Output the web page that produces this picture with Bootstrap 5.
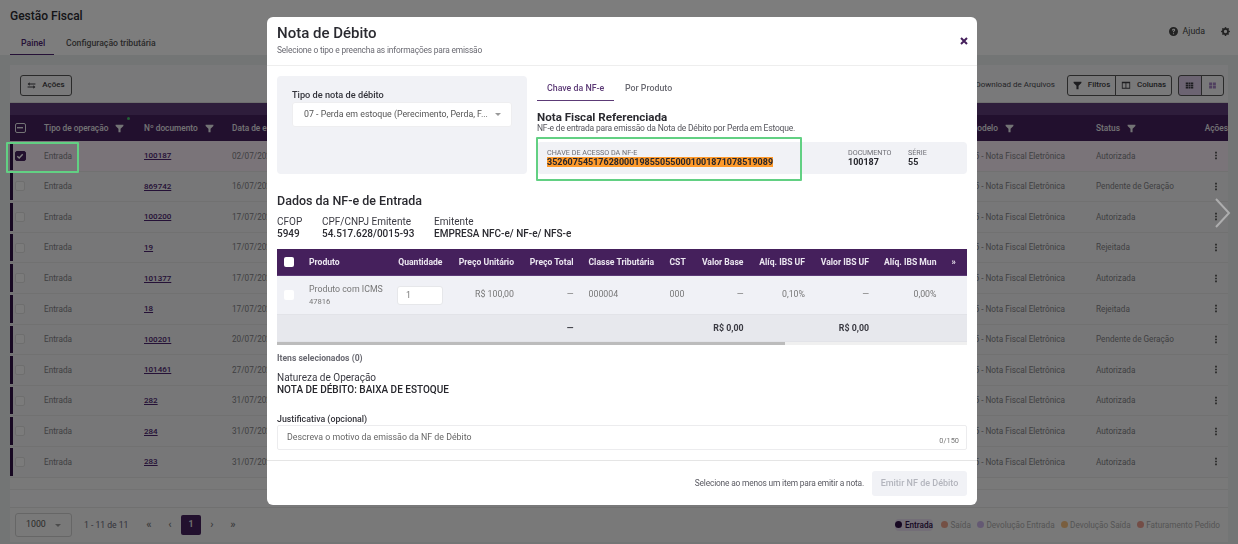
<!DOCTYPE html>
<html lang="pt-BR">
<head>
  <meta charset="UTF-8" />
  <meta name="viewport" content="width=device-width, initial-scale=1.0"/>
  <title>Gestão Fiscal</title>
  <link href="https://cdn.jsdelivr.net/npm/bootstrap@5.3.3/dist/css/bootstrap.min.css" rel="stylesheet">
  <style>
    html, body { height: 544px; overflow: hidden; }
    body { font-family: "Roboto", "Liberation Sans", sans-serif; background: #e6eaea; color: #4a4a52; font-size: 8.2px; }
    svg { display: block; flex: none; }

    /* pagina de fundo */
    .top-area { height: 55px; background: #fbfbfb; padding: 0 10px; }
    .top-title { font-size: 12px; font-weight: 500; color: #2a2a30; padding-top: 9px; line-height: 15px; }
    .top-tabs { margin-top: 7px; }
    .top-tab { font-size: 8.7px; font-weight: 500; line-height: 24px; height: 24px; padding: 0 11px; color: #555; white-space: nowrap; }
    .top-tab.on { color: #4a226e; border-bottom: 1px solid #4a226e; margin-right: 1px; width: 44px; }
    .top-help { margin: -30px -1.5px 0 0; gap: 5px; font-size: 8.8px; color: #444; }
    .page-panel { margin: 10px 10px 0; background: #f3f3f4; height: 443px; border-bottom: 1px solid #e0e0e0; }
    .tools { height: 38px; padding: 10px 4px 0 10px; border-bottom: 1px solid #ddd; }
    .ghost-btn { height: 20.5px; border: 1px solid #555; border-radius: 3px; font-size: 8px; font-weight: 500; color: #3a3a40; padding: 0 7px; gap: 6px; background: transparent; justify-content: center; }
    .btn-group .ghost-btn { border-radius: 0; margin-left: -1px; flex: none; }
    .btn-group .ghost-btn:first-child { border-radius: 3px 0 0 3px; margin-left: 0; }
    .btn-group .ghost-btn:last-child { border-radius: 0 3px 3px 0; }
    .ghost-btn.on { background: #d8c8e4; }
    .w-act { width: 52px; }
    .w-fil { width: 49px; } .w-col { width: 57px; } .w-view { width: 23.5px; padding: 0; }
    .download-txt { font-size: 8px; color: #4a4a52; margin-right: 12px; line-height: 20px; }
    .strip { height: 12px; background: #5c3a76; }
    .grid-row { height: 30.6px; border-bottom: 1px solid #e2e2e2; background: #efeff0; color: #808085; }
    .grid-head { height: 26px; background: #45205c; color: #e6e6ea; font-weight: 500; font-size: 8.3px; border: 0; }
    .grid-row.picked { background: #f4e8f2; }
    .op-bar { width: 2.5px; align-self: stretch; margin: 1px 0; background: #2e1045; flex: none; }
    .grid-head .op-bar { background: transparent; }
    .c-chk { width: 31.5px; flex: none; padding-left: 2.5px; }
    .c-tipo { width: 100px; flex: none; gap: 7px; }
    .c-doc { width: 88px; flex: none; gap: 7px; }
    .c-data { width: 738px; flex: none; }
    .c-mod { width: 126px; flex: none; gap: 7px; }
    .c-stat { width: 99px; flex: none; gap: 7px; }
    .c-act { flex: 1; text-align: right; }
    .c-kebab { flex: 1; padding-left: 19px; color: #444; }
    .doc-lnk { color: #4a226e; font-weight: 500; font-size: 8px; text-decoration: underline; }
    .tick-box { width: 10px; height: 10px; border: 1px solid #ddd; border-radius: 2px; background: #f6f6f6; }
    .tick-box.dark { width: 10.5px; height: 10.5px; background: #45205c; border-color: #45205c; }
    .tick-box.minus { width: 10.5px; height: 10.5px; background: transparent; border: 1px solid #e6e6ea; }
    .filter-dot { left: 83px; top: -5px; width: 3px; height: 3px; border-radius: 50%; background: #45c06a; }
    .gap-strip { height: 12px; background: #f2f2f2; border-bottom: 1px solid #e4e4e4; }
    .pager-area { padding: 0 8px 0 5px; height: 34px; margin: 0 10px; background: #f3f3f3; }
    .page-size { width: 57px; height: 24px; border: 1px solid #ccc; border-radius: 3px; padding: 0 10px; font-size: 8.8px; color: #555; margin-right: 12px; }
    .caret-dn { width: 0; height: 0; border: 3px solid transparent; border-top: 3px solid #999; border-bottom: 0; }
    .page-count { color: #667; font-size: 8.6px; white-space: nowrap; width: 44px; }
    .page-arrows { color: #777; font-size: 11px; font-weight: 500; margin-left: 10.5px; }
    .page-arrows > span { width: 21px; text-align: center; }
    .page-now { height: 20px; border-radius: 2px; background: #45205c; color: #ddd; font-weight: 700; font-size: 8.8px; margin: 0 .5px; }
    .page-arrows > span.page-now { width: 20px; }
    .legend-row { gap: 6px; font-size: 8.2px; color: #aaa; }
    .legend-item { gap: 2.5px; }
    .legend-item.on { color: #2e1045; font-weight: 500; background: #e6dcee; border-radius: 4px; margin-right: 2px; }
    .legend-dot { width: 7px; height: 7px; border-radius: 50%; }

    /* modal */
    .modal-dialog.debit-dialog { width: 710px; max-width: 710px; margin: 17px 0 0 267px; }
    .debit-dialog .modal-content { height: 488px; border: 0; border-radius: 6px; color: #26262c; overflow: hidden; }
    .debit-dialog .modal-header { display: block; height: 48.5px; padding: 9px 10px 0; border-bottom: 1px solid #eee; }
    .debit-title { font-size: 15px; font-weight: 500; line-height: 15px; color: #2a2a30; margin: 0; }
    .debit-sub { font-size: 8.4px; letter-spacing: -.18px; color: #6a6a72; margin-top: 3.5px; line-height: 11px; }
    .debit-close { top: 20px; right: 9px; line-height: 0; }
    .debit-dialog .modal-body { padding: 10.5px 10px 0; flex: none; height: 394px; }
    .type-card { width: 250px; height: 98px; background: #f1f2f6; border-radius: 4px; padding: 13px 15px; flex: none; }
    .type-lbl { font-size: 9.2px; font-weight: 500; color: #33333a; line-height: 12px; margin-bottom: 1px; }
    .type-sel { height: 25px; background: #fff; border: 1px solid #eeeef0; border-radius: 3px; padding: 0 10px 0 11px; font-size: 8.8px; color: #555; white-space: nowrap; }
    .ref-col { width: 430px; margin-left: 10px; flex: none; }
    .ref-tabs { height: 24px; }
    .ref-tab { font-size: 8.8px; font-weight: 500; line-height: 24px; padding: 0 10px; color: #6a6a72; width: 78px; text-align: center; }
    .ref-tab.on { color: #5c3a76; border-bottom: 1px solid #5c3a76; height: 25px; width: 77px; }
    .ref-tab + .ref-tab { margin-left: 1px; width: auto; }
    .ref-title { font-size: 11.6px; font-weight: 700; line-height: 13px; margin-top: 11px; color: #2a2a30; }
    .ref-sub { font-size: 8.5px; letter-spacing: -.19px; line-height: 9px; color: #55555c; }
    .key-box { height: 32px; margin-top: 9px; background: #f1f2f6; border-radius: 4px; padding: 7px 10px 0; }
    .key-lbl { font-size: 7.2px; line-height: 8px; color: #6f6f76; white-space: nowrap; }
    .key-val { font-size: 8.96px; line-height: 11px; font-weight: 700; color: #26262c; white-space: nowrap; }
    .key-val mark { background: #ff9a2a; padding: 0; color: #26262c; }
    .key-doc { width: 60px; flex: none; }
    .key-ser { width: 49px; flex: none; }
    .data-title { font-size: 12.5px; font-weight: 500; line-height: 15px; margin-top: 19px; color: #2a2a30; }
    .data-cols { margin-top: 8px; font-size: 10px; line-height: 12px; color: #3a3a42; }
    .data-cols b { display: block; font-weight: 500; color: #2a2a30; }
    .items-wrap { margin-top: 9px; height: 96px; }
    .items-row { background: #f0f1f6; height: 39px; color: #777; font-size: 8.8px; border-bottom: 1px solid #e2e3e8; }
    .items-head { background: #45205c; height: 27px; color: #ebe6f0; font-weight: 700; font-size: 8.6px; border-bottom: 1px solid #5c3a76; }
    .items-foot { background: #e7e8ed; height: 27px; padding-top: 1px; font-weight: 700; font-size: 8.8px; color: #3a3a42; border-bottom: 1px solid #e2e3e8; }
    .cel { padding: 0 7.5px; flex: none; white-space: nowrap; text-align: right; }
    .w-c { width: 24.5px; padding: 0 0 0 7px; } .w-p { width: 88px; text-align: left; } .w-q { width: 60.5px; }
    .w-u { width: 71.5px; } .w-t { width: 59.5px; } .w-k { width: 81px; text-align: left; } .w-s { width: 31.5px; text-align: left; }
    .w-b { width: 57.5px; } .w-i { width: 61.5px; } .w-v { width: 64px; } .w-m { width: 67.5px; } .w-x { width: 23px; text-align: left; }
    .prod-code { display: block; font-size: 7.6px; line-height: 10px; margin-top: 2px; }
    .prod-name { display: block; line-height: 11px; }
    .qty-box { width: 46px; height: 19px; background: #fff; border: 1px solid #e6e7ea; border-radius: 3px; text-align: left; padding-left: 8px; line-height: 17px; }
    .white-box { width: 10px; height: 10px; background: #fff; border-radius: 2px; display: block; }
    .scroll-track { height: 3px; background: #f0f0f0; }
    .scroll-thumb { width: 508px; height: 3px; background: #bcbcbc; }
    .items-count { font-size: 8.6px; font-weight: 700; color: #6a6a72; line-height: 10px; margin-top: 8px; }
    .nature { font-size: 10px; line-height: 12px; margin-top: 9px; color: #3a3a42; }
    .nature b { display: block; font-weight: 500; color: #26262c; }
    .just-lbl { font-size: 8.8px; font-weight: 500; line-height: 11px; margin-top: 18px; color: #33333a; }
    .just-box { height: 25px; border: 1px solid #ececee; border-radius: 2px; padding: 0 7px 0 9px; font-size: 8.8px; color: #666; }
    .just-count { font-size: 7.4px; color: #777; align-self: flex-end; padding-bottom: 3px; }
    .debit-dialog .modal-footer { height: 45.5px; padding: 2px 10px 0; border-top: 1px solid #e5e5e5; gap: 8px; flex-wrap: nowrap; }
    .debit-dialog .modal-footer > * { margin: 0; }
    .foot-note { font-size: 8.4px; letter-spacing: -.18px; color: #5a5a62; }
    .btn.emit-btn:disabled { width: 95px; height: 25px; padding: 0; border: 0; border-radius: 3px; background: #f1f2f6; color: #b3b5bd; font-size: 9px; font-weight: 500; opacity: 1; }

    /* destaque verde e seta por cima de tudo */
    .green-mark { position: absolute; z-index: 1060; border: 2px solid #62d083; pointer-events: none; border-radius: 1px; }
    .green-a { left: 6px; top: 142px; width: 73px; height: 31px; }
    .green-b { left: 536px; top: 137px; width: 266px; height: 44px; }
    .next-arrow { position: absolute; z-index: 1060; left: 1213px; top: 197px; opacity: .4; }
  </style>
</head>
<body>
  <svg width="0" height="0" class="position-absolute">
    <symbol id="i-funnel" viewBox="0 0 12 12"><path d="M.8 1h10.400v1.600L7.400 6.400V11H4.600V6.400L.8 2.600z" fill="currentColor"/></symbol>
    <symbol id="i-swap" viewBox="0 0 12 12"><path d="M3.500 1.600 .8 4l2.700 2.400V4.800h7.700V3.200H3.500zM8.500 5.600v1.600H.8v1.600h7.700v1.600L11.200 8z" fill="currentColor"/></symbol>
    <symbol id="i-grid" viewBox="0 0 12 12"><path d="M1 2h3v2.200H1zM4.600 2h2.800v2.200H4.600zM8 2h3v2.200H8zM1 4.900h3v2.200H1zM4.600 4.900h2.800v2.200H4.600zM8 4.900h3v2.200H8zM1 7.800h3V10H1zM4.600 7.800h2.800V10H4.600zM8 7.800h3V10H8z" fill="currentColor"/></symbol>
    <symbol id="i-tiles" viewBox="0 0 12 12"><path d="M1.500 2h4v3.600h-4zM6.500 2h4v3.600h-4zM1.500 6.400h4V10h-4zM6.500 6.400h4V10h-4z" fill="currentColor"/></symbol>
    <symbol id="i-cols" viewBox="0 0 12 12"><path fill-rule="evenodd" d="M1 2h10v8.400H1zM2 4v5.400h3.400V4zM6.400 4v5.400H10V4z" fill="currentColor"/></symbol>
    <symbol id="i-kebab" viewBox="0 0 4 12"><path d="M.9 1h2.200v2.200H.9zM.9 4.900h2.200v2.200H.9zM.9 8.800h2.200V11H.9z" fill="currentColor"/></symbol>
    <symbol id="i-help" viewBox="0 0 16 16"><path fill-rule="evenodd" d="M8 0a8 8 0 1 1 0 16A8 8 0 0 1 8 0zM5.200 6h2c.1-.8.4-1.200.9-1.200.5 0 .8.3.8.8 0 .4-.2.7-.8 1.100-.8.6-1.100 1.100-1.100 2.100v.4h1.900v-.3c0-.5.2-.8.8-1.200.8-.6 1.300-1.200 1.300-2.200C11 3.900 9.800 3 8.100 3 6.300 3 5.300 4.100 5.200 6zM7 11v2h2v-2z" fill="currentColor"/></symbol>
    <symbol id="i-gear" viewBox="0 0 16 16"><path d="M9.405 1.050c-.413-1.400-2.397-1.400-2.810 0l-.1.34a1.464 1.464 0 0 1-2.105.872l-.31-.17c-1.283-.698-2.686.705-1.987 1.987l.169.311c.446.82.023 1.841-.872 2.105l-.34.1c-1.400.413-1.400 2.397 0 2.810l.34.1a1.464 1.464 0 0 1 .872 2.105l-.17.31c-.698 1.283.705 2.686 1.987 1.987l.311-.169a1.464 1.464 0 0 1 2.105.872l.1.34c.413 1.400 2.397 1.400 2.810 0l.1-.34a1.464 1.464 0 0 1 2.105-.872l.31.17c1.283.698 2.686-.705 1.987-1.987l-.169-.311a1.464 1.464 0 0 1 .872-2.105l.34-.1c1.400-.413 1.400-2.397 0-2.810l-.34-.1a1.464 1.464 0 0 1-.872-2.105l.17-.31c.698-1.283-.705-2.686-1.987-1.987l-.311.169a1.464 1.464 0 0 1-2.105-.872l-.1-.34zM8 10.930a2.929 2.929 0 1 1 0-5.860 2.929 2.929 0 0 1 0 5.858z" fill="currentColor"/></symbol>
  </svg>

  <header class="top-area">
    <div class="top-title">Gestão Fiscal</div>
    <div class="d-flex top-tabs">
      <div class="top-tab on">Painel</div>
      <div class="top-tab">Configuração tributária</div>
    </div>
    <div class="d-flex justify-content-end align-items-center top-help">
      <svg width="9" height="9"><use href="#i-help"/></svg><span>Ajuda</span>
      <svg style="margin-left:10.5px" width="9" height="9"><use href="#i-gear"/></svg>
    </div>
  </header>

  <section class="page-panel">
    <div class="tools d-flex">
      <button type="button" class="btn ghost-btn w-act d-flex align-items-center"><svg width="9" height="9"><use href="#i-swap"/></svg>Ações</button>
      <div class="ms-auto d-flex align-items-start">
        <span class="download-txt">Download de Arquivos</span>
        <div class="btn-group">
          <button type="button" class="btn ghost-btn w-fil d-flex align-items-center"><svg width="9" height="9"><use href="#i-funnel"/></svg>Filtros</button>
          <button type="button" class="btn ghost-btn w-col d-flex align-items-center"><svg width="10" height="10"><use href="#i-cols"/></svg>Colunas</button>
        </div>
        <div class="btn-group" style="margin-left:6px">
          <button type="button" class="btn ghost-btn w-view on d-flex align-items-center"><svg width="9" height="9"><use href="#i-grid"/></svg></button>
          <button type="button" class="btn ghost-btn w-view d-flex align-items-center"><svg width="9" height="9" style="color:#a080c0"><use href="#i-tiles"/></svg></button>
        </div>
      </div>
    </div>
    <div class="strip"></div>
    <div class="grid-row grid-head d-flex align-items-center">
      <span class="op-bar"></span>
      <div class="c-chk"><span class="tick-box minus d-flex align-items-center justify-content-center"><svg width="6" height="2"><rect width="6" height="1.4" fill="#e6e6ea"/></svg></span></div>
      <div class="c-tipo d-flex align-items-center position-relative"><span>Tipo de operação</span><svg width="9" height="9"><use href="#i-funnel"/></svg><i class="filter-dot position-absolute"></i></div>
      <div class="c-doc d-flex align-items-center"><span>Nº documento</span><svg width="9" height="9"><use href="#i-funnel"/></svg></div>
      <div class="c-data">Data de emissão</div>
      <div class="c-mod d-flex align-items-center"><span>Modelo</span><svg width="9" height="9"><use href="#i-funnel"/></svg></div>
      <div class="c-stat d-flex align-items-center"><span>Status</span><svg width="9" height="9"><use href="#i-funnel"/></svg></div>
      <div class="c-act">Ações</div>
    </div>
    <div class="grid-row picked d-flex align-items-center"><span class="op-bar"></span><div class="c-chk"><span class="tick-box dark d-flex align-items-center justify-content-center"><svg width="8" height="8" viewBox="0 0 8 8"><path d="M1.300 4.200 3.200 6l3.500-3.800" fill="none" stroke="#fff" stroke-width="1.400"/></svg></span></div><div class="c-tipo">Entrada</div><div class="c-doc"><a class="doc-lnk">100187</a></div><div class="c-data">02/07/2026</div><div class="c-mod">55 - Nota Fiscal Eletrônica</div><div class="c-stat">Autorizada</div><div class="c-kebab"><svg width="4" height="9"><use href="#i-kebab"/></svg></div></div>
    <div class="grid-row d-flex align-items-center"><span class="op-bar"></span><div class="c-chk"><span class="tick-box d-block"></span></div><div class="c-tipo">Entrada</div><div class="c-doc"><a class="doc-lnk">869742</a></div><div class="c-data">16/07/2026</div><div class="c-mod">55 - Nota Fiscal Eletrônica</div><div class="c-stat">Pendente de Geração</div><div class="c-kebab"><svg width="4" height="9"><use href="#i-kebab"/></svg></div></div>
    <div class="grid-row d-flex align-items-center"><span class="op-bar"></span><div class="c-chk"><span class="tick-box d-block"></span></div><div class="c-tipo">Entrada</div><div class="c-doc"><a class="doc-lnk">100200</a></div><div class="c-data">17/07/2026</div><div class="c-mod">55 - Nota Fiscal Eletrônica</div><div class="c-stat">Autorizada</div><div class="c-kebab"><svg width="4" height="9"><use href="#i-kebab"/></svg></div></div>
    <div class="grid-row d-flex align-items-center"><span class="op-bar"></span><div class="c-chk"><span class="tick-box d-block"></span></div><div class="c-tipo">Entrada</div><div class="c-doc"><a class="doc-lnk">19</a></div><div class="c-data">17/07/2026</div><div class="c-mod">55 - Nota Fiscal Eletrônica</div><div class="c-stat">Rejeitada</div><div class="c-kebab"><svg width="4" height="9"><use href="#i-kebab"/></svg></div></div>
    <div class="grid-row d-flex align-items-center"><span class="op-bar"></span><div class="c-chk"><span class="tick-box d-block"></span></div><div class="c-tipo">Entrada</div><div class="c-doc"><a class="doc-lnk">101377</a></div><div class="c-data">17/07/2026</div><div class="c-mod">55 - Nota Fiscal Eletrônica</div><div class="c-stat">Autorizada</div><div class="c-kebab"><svg width="4" height="9"><use href="#i-kebab"/></svg></div></div>
    <div class="grid-row d-flex align-items-center"><span class="op-bar"></span><div class="c-chk"><span class="tick-box d-block"></span></div><div class="c-tipo">Entrada</div><div class="c-doc"><a class="doc-lnk">18</a></div><div class="c-data">17/07/2026</div><div class="c-mod">55 - Nota Fiscal Eletrônica</div><div class="c-stat">Rejeitada</div><div class="c-kebab"><svg width="4" height="9"><use href="#i-kebab"/></svg></div></div>
    <div class="grid-row d-flex align-items-center"><span class="op-bar"></span><div class="c-chk"><span class="tick-box d-block"></span></div><div class="c-tipo">Entrada</div><div class="c-doc"><a class="doc-lnk">100201</a></div><div class="c-data">20/07/2026</div><div class="c-mod">55 - Nota Fiscal Eletrônica</div><div class="c-stat">Pendente de Geração</div><div class="c-kebab"><svg width="4" height="9"><use href="#i-kebab"/></svg></div></div>
    <div class="grid-row d-flex align-items-center"><span class="op-bar"></span><div class="c-chk"><span class="tick-box d-block"></span></div><div class="c-tipo">Entrada</div><div class="c-doc"><a class="doc-lnk">101461</a></div><div class="c-data">27/07/2026</div><div class="c-mod">55 - Nota Fiscal Eletrônica</div><div class="c-stat">Autorizada</div><div class="c-kebab"><svg width="4" height="9"><use href="#i-kebab"/></svg></div></div>
    <div class="grid-row d-flex align-items-center"><span class="op-bar"></span><div class="c-chk"><span class="tick-box d-block"></span></div><div class="c-tipo">Entrada</div><div class="c-doc"><a class="doc-lnk">282</a></div><div class="c-data">31/07/2026</div><div class="c-mod">55 - Nota Fiscal Eletrônica</div><div class="c-stat">Autorizada</div><div class="c-kebab"><svg width="4" height="9"><use href="#i-kebab"/></svg></div></div>
    <div class="grid-row d-flex align-items-center"><span class="op-bar"></span><div class="c-chk"><span class="tick-box d-block"></span></div><div class="c-tipo">Entrada</div><div class="c-doc"><a class="doc-lnk">284</a></div><div class="c-data">31/07/2026</div><div class="c-mod">55 - Nota Fiscal Eletrônica</div><div class="c-stat">Autorizada</div><div class="c-kebab"><svg width="4" height="9"><use href="#i-kebab"/></svg></div></div>
    <div class="grid-row d-flex align-items-center"><span class="op-bar"></span><div class="c-chk"><span class="tick-box d-block"></span></div><div class="c-tipo">Entrada</div><div class="c-doc"><a class="doc-lnk">283</a></div><div class="c-data">31/07/2026</div><div class="c-mod">55 - Nota Fiscal Eletrônica</div><div class="c-stat">Autorizada</div><div class="c-kebab"><svg width="4" height="9"><use href="#i-kebab"/></svg></div></div>
    <div class="gap-strip"></div>
  </section>

  <footer class="pager-area d-flex align-items-center">
    <div class="page-size d-flex align-items-center justify-content-between"><span>1000</span><span class="caret-dn"></span></div>
    <span class="page-count">1 - 11 de 11</span>
    <div class="page-arrows d-flex align-items-center"><span>«</span><span>‹</span><span class="page-now d-flex align-items-center justify-content-center">1</span><span>›</span><span>»</span></div>
    <div class="legend-row ms-auto d-flex align-items-center">
      <span class="legend-item on d-flex align-items-center"><i class="legend-dot" style="background:#2e1045"></i>Entrada</span>
      <span class="legend-item d-flex align-items-center"><i class="legend-dot" style="background:#e8a08a"></i>Saída</span>
      <span class="legend-item d-flex align-items-center"><i class="legend-dot" style="background:#c9b3e6"></i>Devolução Entrada</span>
      <span class="legend-item d-flex align-items-center"><i class="legend-dot" style="background:#f3bd7e"></i>Devolução Saída</span>
      <span class="legend-item d-flex align-items-center"><i class="legend-dot" style="background:#e79a8c"></i>Faturamento Pedido</span>
    </div>
  </footer>

  <div class="modal-backdrop show"></div>

  <div class="modal d-block" tabindex="-1">
    <div class="modal-dialog debit-dialog">
      <div class="modal-content">
        <div class="modal-header position-relative">
          <h5 class="debit-title">Nota de Débito</h5>
          <div class="debit-sub">Selecione o tipo e preencha as informações para emissão</div>
          <span class="debit-close position-absolute"><svg width="8" height="8" viewBox="0 0 8 8"><path d="M1 1l6 6M7 1 1 7" stroke="#45205c" stroke-width="2"/></svg></span>
        </div>
        <div class="modal-body">
          <div class="d-flex">
            <div class="type-card">
              <div class="type-lbl">Tipo de nota de débito</div>
              <div class="type-sel d-flex align-items-center justify-content-between">
                <span>07 - Perda em estoque (Perecimento, Perda, F...</span><span class="caret-dn"></span>
              </div>
            </div>
            <div class="ref-col">
              <div class="ref-tabs d-flex">
                <div class="ref-tab on text-nowrap">Chave da NF-e</div>
                <div class="ref-tab text-nowrap">Por Produto</div>
              </div>
              <div class="ref-title">Nota Fiscal Referenciada</div>
              <div class="ref-sub">NF-e de entrada para emissão da Nota de Débito por Perda em Estoque.</div>
              <div class="key-box d-flex">
                <div class="flex-grow-1">
                  <div class="key-lbl">CHAVE DE ACESSO DA NF-E</div>
                  <div class="key-val"><mark>35260754517628000198550550001001871078519089</mark></div>
                </div>
                <div class="key-doc">
                  <div class="key-lbl">DOCUMENTO</div>
                  <div class="key-val">100187</div>
                </div>
                <div class="key-ser">
                  <div class="key-lbl">SÉRIE</div>
                  <div class="key-val">55</div>
                </div>
              </div>
            </div>
          </div>

          <div class="data-title">Dados da NF-e de Entrada</div>
          <div class="data-cols d-flex">
            <div style="width:45px">CFOP<b>5949</b></div>
            <div style="width:112px">CPF/CNPJ Emitente<b>54.517.628/0015-93</b></div>
            <div>Emitente<b>EMPRESA NFC-e/ NF-e/ NFS-e</b></div>
          </div>

          <div class="items-wrap">
            <div class="items-head d-flex align-items-center">
              <div class="cel w-c"><span class="white-box"></span></div>
              <div class="cel w-p">Produto</div><div class="cel w-q">Quantidade</div><div class="cel w-u">Preço Unitário</div><div class="cel w-t">Preço Total</div><div class="cel w-k">Classe Tributária</div><div class="cel w-s">CST</div><div class="cel w-b">Valor Base</div><div class="cel w-i">Alíq. IBS UF</div><div class="cel w-v">Valor IBS UF</div><div class="cel w-m">Alíq. IBS Mun</div><div class="cel w-x">»</div>
            </div>
            <div class="items-row d-flex align-items-center">
              <div class="cel w-c"><span class="white-box"></span></div>
              <div class="cel w-p"><span class="prod-name">Produto com ICMS</span><span class="prod-code">47816</span></div>
              <div class="cel w-q"><div class="qty-box">1</div></div>
              <div class="cel w-u">R$ 100,00</div><div class="cel w-t">—</div><div class="cel w-k">000004</div><div class="cel w-s">000</div><div class="cel w-b">—</div><div class="cel w-i">0,10%</div><div class="cel w-v">—</div><div class="cel w-m">0,00%</div><div class="cel w-x"></div>
            </div>
            <div class="items-foot d-flex align-items-center">
              <div class="cel w-c"></div><div class="cel w-p"></div><div class="cel w-q"></div><div class="cel w-u"></div><div class="cel w-t">—</div><div class="cel w-k"></div><div class="cel w-s"></div><div class="cel w-b">R$ 0,00</div><div class="cel w-i"></div><div class="cel w-v">R$ 0,00</div><div class="cel w-m"></div><div class="cel w-x"></div>
            </div>
            <div class="scroll-track"><div class="scroll-thumb"></div></div>
          </div>

          <div class="items-count">Itens selecionados (0)</div>
          <div class="nature">Natureza de Operação<b>NOTA DE DÉBITO: BAIXA DE ESTOQUE</b></div>
          <div class="just-lbl">Justificativa (opcional)</div>
          <div class="just-box d-flex align-items-center justify-content-between">
            <span>Descreva o motivo da emissão da NF de Débito</span><span class="just-count">0/150</span>
          </div>
        </div>
        <div class="modal-footer">
          <span class="foot-note">Selecione ao menos um item para emitir a nota.</span>
          <button type="button" class="btn emit-btn" disabled>Emitir NF de Débito</button>
        </div>
      </div>
    </div>
  </div>

  <div class="green-mark green-a"></div>
  <div class="green-mark green-b"></div>
  <svg class="next-arrow" width="18" height="32" viewBox="0 0 18 32"><path d="M3 2l13 14L3 30" fill="none" stroke="#fff" stroke-width="2"/></svg>
</body>
</html>
